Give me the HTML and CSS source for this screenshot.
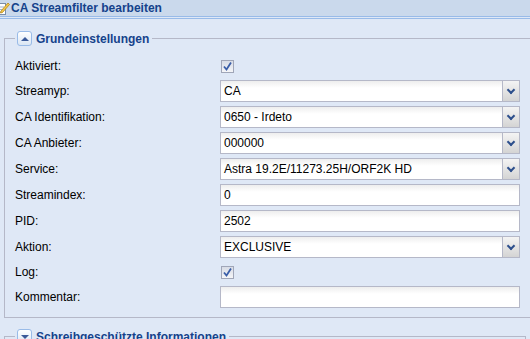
FILE: index.html
```html
<!DOCTYPE html>
<html lang="de">
<head>
    <meta charset="UTF-8">
    <title>CA Streamfilter bearbeiten</title>
    <link rel="stylesheet" href="styles.css">
</head>
<body>
    <div class="panel-header">
        <svg class="header-icon" width="16" height="16" viewBox="0 0 16 16">
            <rect x="1.5" y="3.5" width="10" height="11" fill="#fff" stroke="#7a8da8"/>
            <line x1="3" y1="7" x2="10" y2="7" stroke="#9fb3cf"/>
            <line x1="3" y1="9.5" x2="10" y2="9.5" stroke="#9fb3cf"/>
            <line x1="3" y1="12" x2="8" y2="12" stroke="#9fb3cf"/>
            <path d="M7 11 L14 3 L15.5 4.5 L8.5 12.5 L6.5 13 Z" fill="#f2c94c" stroke="#b8861b" stroke-width="0.8"/>
        </svg>
        <span class="header-title">CA Streamfilter bearbeiten</span>
    </div>

    <div class="panel-body">
        <fieldset class="group">
            <legend><span class="tool"><span class="arrow-up"></span></span>Grundeinstellungen</legend>

            <div class="row short">
                <label>Aktiviert:</label>
                <span class="check"><svg width="11" height="11" viewBox="0 0 11 11"><path d="M2 5.5 L4.5 8.5 L9 1.5" fill="none" stroke="#3a5ea8" stroke-width="1.8"/></svg></span>
            </div>
            <div class="row">
                <label>Streamyp:</label>
                <div class="field combo"><span class="value">CA</span><span class="trigger"></span></div>
            </div>
            <div class="row">
                <label>CA Identifikation:</label>
                <div class="field combo"><span class="value">0650 - Irdeto</span><span class="trigger"></span></div>
            </div>
            <div class="row">
                <label>CA Anbieter:</label>
                <div class="field combo"><span class="value">000000</span><span class="trigger"></span></div>
            </div>
            <div class="row">
                <label>Service:</label>
                <div class="field combo"><span class="value">Astra 19.2E/11273.25H/ORF2K HD</span><span class="trigger"></span></div>
            </div>
            <div class="row">
                <label>Streamindex:</label>
                <div class="field"><span class="value">0</span></div>
            </div>
            <div class="row">
                <label>PID:</label>
                <div class="field"><span class="value">2502</span></div>
            </div>
            <div class="row">
                <label>Aktion:</label>
                <div class="field combo"><span class="value">EXCLUSIVE</span><span class="trigger"></span></div>
            </div>
            <div class="row short">
                <label>Log:</label>
                <span class="check"><svg width="11" height="11" viewBox="0 0 11 11"><path d="M2 5.5 L4.5 8.5 L9 1.5" fill="none" stroke="#3a5ea8" stroke-width="1.8"/></svg></span>
            </div>
            <div class="row">
                <label>Kommentar:</label>
                <div class="field"><span class="value"></span></div>
            </div>
        </fieldset>

        <fieldset class="group collapsed">
            <legend><span class="tool"><span class="arrow-down"></span></span>Schreibgeschützte Informationen</legend>
        </fieldset>
    </div>
</body>
</html>
```

FILE: styles.css
```css
html {
    background-color: #dfe8f6;
}

body {
    margin: 0;
    font-family: 'Liberation Sans', Arial, sans-serif;
    font-size: 12px;
    color: #000;
    overflow: hidden;
}

.panel-header {
    height: 16px;
    display: flex;
    align-items: center;
    background-color: #cad9ec;
    border-bottom: 1px solid #99bbe8;
    overflow: hidden;
}

.header-icon {
    margin-left: -6px;
    margin-right: 1px;
    flex: none;
}

.header-title {
    font-weight: bold;
    color: #15428b;
}

.panel-body {
    margin-top: 1px;
    border-top: 1px solid #99bbe8;
    padding: 12px 4px 0 4px;
}

.group {
    margin: 0;
    padding: 10px 10px 5px 10px;
    border: 1px solid #b5b8c8;
}

.group legend {
    display: flex;
    align-items: center;
    padding: 0 3px 0 2px;
    font-weight: bold;
    color: #15428b;
    height: 15px;
}

.tool {
    width: 13px;
    height: 13px;
    margin-right: 4px;
    border: 1px solid #99bbe8;
    border-radius: 3px;
    background: linear-gradient(#ffffff, #dae6f4);
    display: flex;
    align-items: center;
    justify-content: center;
}

.arrow-up {
    width: 0;
    height: 0;
    border-left: 4px solid transparent;
    border-right: 4px solid transparent;
    border-bottom: 4px solid #3b5a99;
}

.arrow-down {
    width: 0;
    height: 0;
    border-left: 4px solid transparent;
    border-right: 4px solid transparent;
    border-top: 4px solid #3b5a99;
}

.collapsed {
    margin-top: 11px;
    padding-bottom: 20px;
}

.row {
    display: flex;
    align-items: center;
    height: 22px;
    margin-bottom: 4px;
}

.row.short {
    height: 20px;
}

.row label {
    width: 205px;
    flex: none;
}

.check {
    width: 11px;
    height: 11px;
    margin-left: 1px;
    border: 1px solid #a0a6b8;
    background: linear-gradient(#d8dce6, #f4f5f8);
    display: flex;
}

.field {
    box-sizing: border-box;
    width: 300px;
    height: 22px;
    display: flex;
    border: 1px solid #b5b8c8;
    background: linear-gradient(#eeeeee 0, #ffffff 7px);
}

.field .value {
    flex: 1;
    padding-left: 3px;
    line-height: 20px;
    white-space: nowrap;
}

.trigger {
    width: 16px;
    flex: none;
    border-left: 1px solid #b5b8c8;
    background: linear-gradient(#f4f4f4, #d4d4d4);
    position: relative;
}

.trigger::after {
    content: '';
    position: absolute;
    left: 5px;
    top: 6px;
    width: 4px;
    height: 4px;
    border-right: 2px solid #2d4f8c;
    border-bottom: 2px solid #2d4f8c;
    transform: rotate(45deg);
}
```
